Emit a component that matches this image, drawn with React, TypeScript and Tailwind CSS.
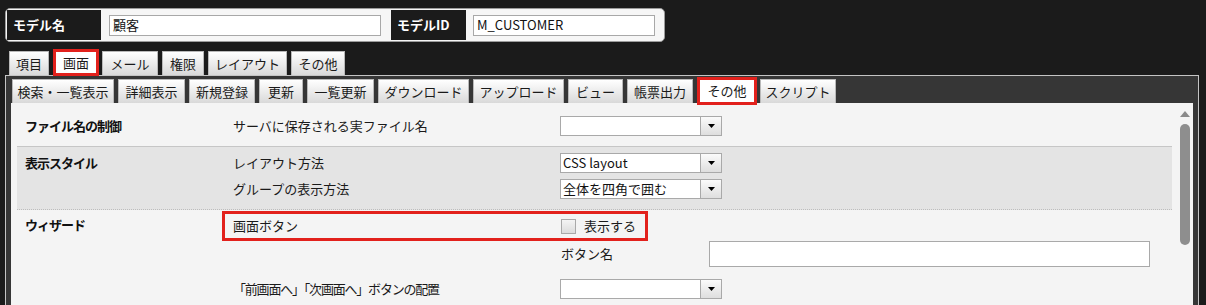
import React from 'react';

const topTabs = [
  { label: '項目', w: 'w-[40px]' },
  { label: '画面', w: 'w-[46px]', active: true },
  { label: 'メール', w: 'w-[56px]' },
  { label: '権限', w: 'w-[42px]' },
  { label: 'レイアウト', w: 'w-[79px]' },
  { label: 'その他', w: 'w-[54px]' },
];

const subTabs = [
  { label: '検索・一覧表示', w: 'w-[102px]' },
  { label: '詳細表示', w: 'w-[67px]' },
  { label: '新規登録', w: 'w-[66px]' },
  { label: '更新', w: 'w-[44px]' },
  { label: '一覧更新', w: 'w-[67px]' },
  { label: 'ダウンロード', w: 'w-[91px]' },
  { label: 'アップロード', w: 'w-[91px]' },
  { label: 'ビュー', w: 'w-[55px]' },
  { label: '帳票出力', w: 'w-[66px]' },
  { label: 'その他', w: 'w-[60px]', active: true },
  { label: 'スクリプト', w: 'w-[76px]' },
];

type Tab = { label: string; w: string; active?: boolean };

const TabButton = ({ tab, tall }: { tab: Tab; tall: string }) =>
  tab.active ? (
    <div
      className={`${tab.w} ${tall} relative z-10 -mr-px flex items-center justify-center border-[3px] border-[#e2211c] bg-white text-[13px] text-[#1a1a1a]`}
    >
      {tab.label}
    </div>
  ) : (
    <div
      className={`${tab.w} h-[24px] flex items-center justify-center border border-b-0 border-[#b9b9b9] bg-linear-to-b from-white to-[#d9d9d9] text-[13px] text-[#1a1a1a]`}
    >
      {tab.label}
    </div>
  );

const Select = ({ value }: { value?: string }) => (
  <div className="w-[162px] h-[20px] flex border border-[#a9a9a9] bg-white">
    <div className="flex-1 pl-[2px] leading-[18px] text-[13px] text-[#111] whitespace-nowrap overflow-hidden">
      {value}
    </div>
    <div className="w-[21px] flex items-center justify-center border-l border-[#a9a9a9] bg-linear-to-b from-[#fbfbfb] to-[#dedede]">
      <svg width="7" height="4" viewBox="0 0 7 4">
        <polygon points="0,0 7,0 3.5,4" fill="#000" />
      </svg>
    </div>
  </div>
);

const SubRow = ({ label, tight, children }: { label: string; tight?: boolean; children?: React.ReactNode }) => (
  <div className="flex items-center h-[20px] pl-[11px]">
    <div className={`w-[327px] text-[13px] text-[#1a1a1a] whitespace-nowrap ${tight ? 'tracking-[-1.2px]' : ''}`}>
      {label}
    </div>
    {children}
  </div>
);

export default function App() {
  return (
    <div className="w-[1206px] h-[305px] overflow-hidden bg-[#1b1b1b] font-['Noto_Sans_CJK_JP','Noto_Sans',sans-serif] text-[13px]">
      {/* モデル情報 */}
      <div className="pl-[5px] pt-[8px]">
        <div className="w-[660px] h-[34px] flex p-px border border-[#9c9c9c] rounded-[5px] bg-[#f6f6f6]">
          <div className="w-[94px] flex items-center pl-[6px] bg-[#1b1b1b] text-white font-bold text-[13px]">
            モデル名
          </div>
          <div className="w-[290px] flex items-center pl-[8px]">
            <div className="w-[272px] h-[21px] flex items-center px-[3px] border border-[#a8a8a8] bg-white text-[13px] text-[#111]">
              顧客
            </div>
          </div>
          <div className="w-[75px] flex items-center pl-[6px] bg-[#1b1b1b] text-white font-bold text-[13px]">
            モデルID
          </div>
          <div className="flex-1 flex items-center pl-[7px]">
            <div className="w-[182px] h-[21px] flex items-center px-[3px] border border-[#a8a8a8] bg-white text-[13px] text-[#111]">
              M_CUSTOMER
            </div>
          </div>
        </div>
      </div>

      {/* 上段タブ */}
      <div className="mt-[7px] h-[26px] pl-[9px] flex items-end gap-[4px]">
        {topTabs.map((t) => (
          <TabButton key={t.label} tab={t} tall="h-[27px] -mb-px" />
        ))}
      </div>

      {/* パネル */}
      <div className="ml-[5px] w-[1194px] h-[240px] border border-[#c4c4c4] bg-[#363636] px-[5px] pt-[3px]">
        <div className="h-[24px] pl-px flex items-end gap-[4px]">
          {subTabs.map((t) => (
            <TabButton key={t.label} tab={t} tall="h-[28px] -mb-[2px]" />
          ))}
        </div>

        <div className="h-[220px] flex bg-[#f4f4f4] pt-[6px] pl-[6px]">
          <div className="w-[1155px]">
            {/* ファイル名の制御 */}
            <div className="flex pl-[8px] pt-[7px] pb-[10px] border-b border-[#c6c6c6]">
              <div className="w-[197px] leading-[20px] font-bold tracking-[-1px] text-[#111]">ファイル名の制御</div>
              <div className="flex flex-col">
                <SubRow label="サーバに保存される実ファイル名">
                  <Select />
                </SubRow>
              </div>
            </div>

            {/* 表示スタイル */}
            <div className="flex pl-[8px] pt-[6px] pb-[10px] bg-[#e4e4e4] border-b border-dotted border-[#bdbdbd]">
              <div className="w-[197px] leading-[20px] font-bold tracking-[-1px] text-[#111]">表示スタイル</div>
              <div className="flex flex-col gap-[6px]">
                <SubRow label="レイアウト方法">
                  <Select value="CSS layout" />
                </SubRow>
                <SubRow label="グループの表示方法">
                  <Select value="全体を四角で囲む" />
                </SubRow>
              </div>
            </div>

            {/* ウィザード */}
            <div className="flex pl-[8px] pt-px">
              <div className="w-[197px] pt-[4px] leading-[20px] font-bold tracking-[-1px] text-[#111]">ウィザード</div>
              <div className="flex flex-col">
                <div className="w-[426px] h-[30px] flex items-center pl-[8px] border-[3px] border-[#e2211c]">
                  <div className="w-[328px] text-[#1a1a1a]">画面ボタン</div>
                  <div className="w-[15px] h-[15px] border border-[#a9a9a9] bg-linear-to-b from-[#f4f4f4] to-[#dcdcdc]" />
                  <div className="ml-[8px] text-[#1a1a1a]">表示する</div>
                </div>
                <div className="flex items-center h-[26px] pl-[339px]">
                  <div className="w-[148px] text-[#1a1a1a]">ボタン名</div>
                  <div className="w-[441px] h-[26px] border border-[#a9a9a9] bg-white" />
                </div>
                <div className="mt-[12px]">
                  <SubRow label="「前画面へ」「次画面へ」ボタンの配置" tight>
                    <Select />
                  </SubRow>
                </div>
              </div>
            </div>
          </div>

          {/* スクロールバー */}
          <div className="flex-1 flex flex-col items-start pl-[8px] pt-[2px]">
            <svg width="10" height="6" viewBox="0 0 10 6">
              <polygon points="5,0 10,6 0,6" fill="#8a8a8a" />
            </svg>
            <div className="mt-[7px] w-[10px] h-[121px] rounded-full bg-[#8e8e8e]" />
          </div>
        </div>
      </div>
    </div>
  );
}
